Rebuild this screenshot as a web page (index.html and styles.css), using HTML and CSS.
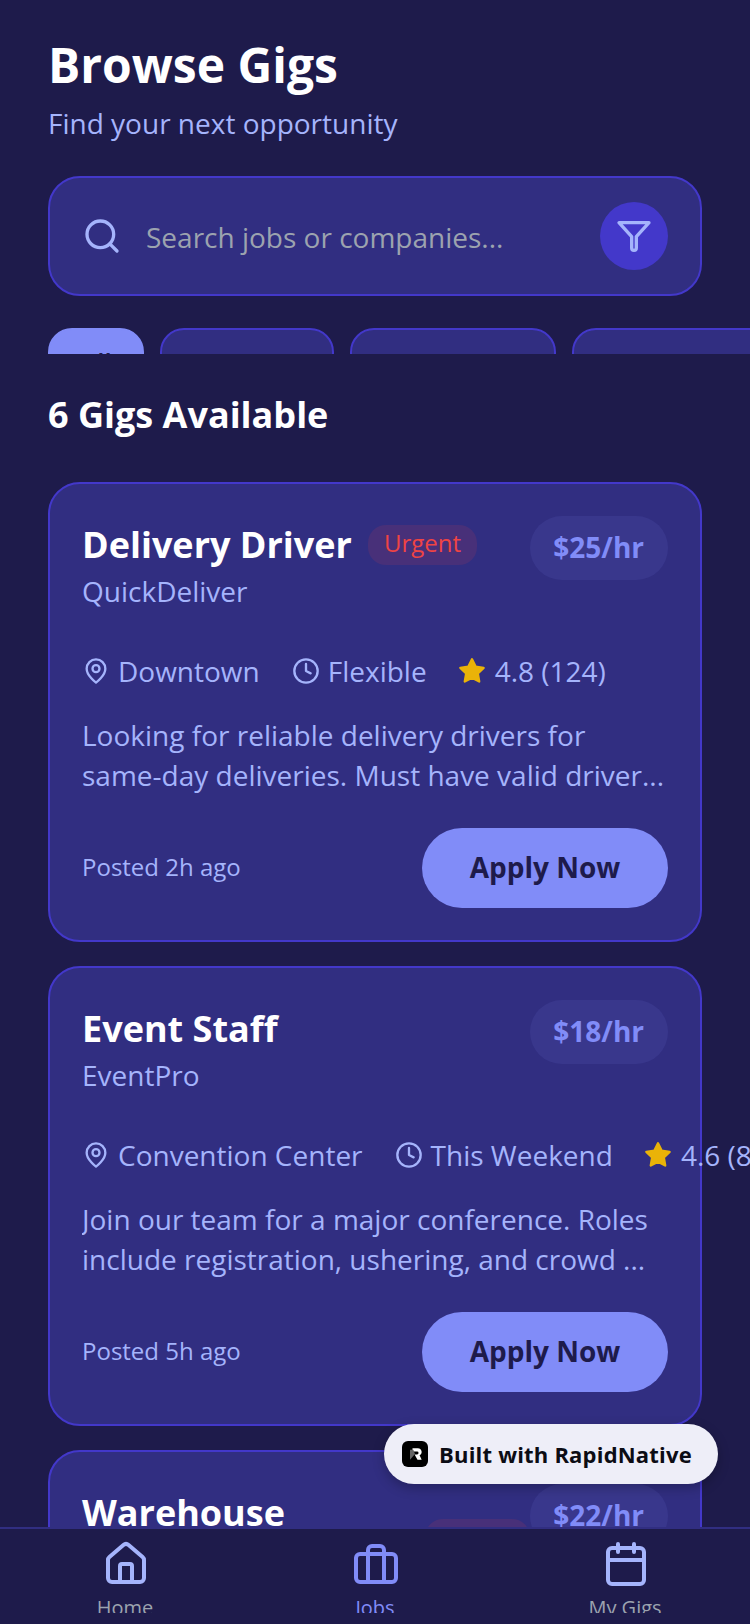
FILE: index.html
```html
<!DOCTYPE html>
<html lang="en">
<head>
  <meta charset="UTF-8" />
  <meta name="viewport" content="width=device-width, initial-scale=1" />
  <title>Browse Gigs</title>
  <link rel="stylesheet" href="styles.css">
</head>
<body>
<div class="screen">
  <main class="main">
    <header class="header">
      <h1>Browse Gigs</h1>
      <p>Find your next opportunity</p>
    </header>

    <div class="search">
      <svg class="search-icon" viewBox="0 0 24 24"><circle cx="11" cy="11" r="8"/><path d="m21 21-4.300-4.300"/></svg>
      <span class="search-text">Search jobs or companies...</span>
      <span class="filter-btn">
        <svg viewBox="0 0 24 24"><path d="M3 4h18l-7.600 8.400V19.200a1.400 1.400 0 0 1-2.800 0V12.400z"/></svg>
      </span>
    </div>

    <div class="chips">
      <span class="chip active">All</span>
      <span class="chip w1">Delivery</span>
      <span class="chip w2">Hospitality</span>
      <span class="chip w3">Warehouse</span>
    </div>

    <h2 class="count">6 Gigs Available</h2>

    <section class="card first">
      <div class="card-top">
        <div class="card-head">
          <div class="title-row">
            <h3>Delivery Driver</h3>
            <span class="urgent">Urgent</span>
          </div>
          <div class="company">QuickDeliver</div>
        </div>
        <span class="pay">$25/hr</span>
      </div>
      <div class="meta">
        <span class="meta-item"><svg viewBox="0 0 24 24"><path d="M20 10c0 6-8 12-8 12s-8-6-8-12a8 8 0 0 1 16 0z"/><circle cx="12" cy="10" r="3"/></svg>Downtown</span>
        <span class="meta-item"><svg viewBox="0 0 24 24"><circle cx="12" cy="12" r="10"/><path d="M12 6v6l4 2"/></svg>Flexible</span>
        <span class="meta-item"><svg class="star" viewBox="0 0 24 24"><path d="M12 2l3.090 6.260L22 9.270l-5 4.870 1.180 6.880L12 17.770l-6.180 3.250L7 14.140 2 9.270l6.910-1.010L12 2z"/></svg>4.8 (124)</span>
      </div>
      <p class="desc">Looking for reliable delivery drivers for same-day deliveries. Must have valid driver...</p>
      <div class="card-foot">
        <span class="posted">Posted 2h ago</span>
        <span class="apply">Apply Now</span>
      </div>
    </section>

    <section class="card">
      <div class="card-top">
        <div class="card-head">
          <div class="title-row">
            <h3>Event Staff</h3>
          </div>
          <div class="company">EventPro</div>
        </div>
        <span class="pay">$18/hr</span>
      </div>
      <div class="meta">
        <span class="meta-item"><svg viewBox="0 0 24 24"><path d="M20 10c0 6-8 12-8 12s-8-6-8-12a8 8 0 0 1 16 0z"/><circle cx="12" cy="10" r="3"/></svg>Convention Center</span>
        <span class="meta-item"><svg viewBox="0 0 24 24"><circle cx="12" cy="12" r="10"/><path d="M12 6v6l4 2"/></svg>This Weekend</span>
        <span class="meta-item"><svg class="star" viewBox="0 0 24 24"><path d="M12 2l3.090 6.260L22 9.270l-5 4.870 1.180 6.880L12 17.770l-6.180 3.250L7 14.140 2 9.270l6.910-1.010L12 2z"/></svg>4.6 (89)</span>
      </div>
      <p class="desc">Join our team for a major conference. Roles include registration, ushering, and crowd ...</p>
      <div class="card-foot">
        <span class="posted">Posted 5h ago</span>
        <span class="apply">Apply Now</span>
      </div>
    </section>

    <section class="card">
      <div class="card-top">
        <div class="card-head">
          <div class="title-row">
            <h3 class="narrow">Warehouse Associate</h3>
            <span class="urgent">Urgent</span>
          </div>
          <div class="company">StoreHub</div>
        </div>
        <span class="pay">$22/hr</span>
      </div>
    </section>
  </main>

  <nav class="tabbar">
    <div class="tab">
      <svg viewBox="0 0 24 24"><path d="M3 10a2 2 0 0 1 .7-1.500l7-6a2 2 0 0 1 2.600 0l7 6a2 2 0 0 1 .7 1.500v9a2 2 0 0 1-2 2H5a2 2 0 0 1-2-2z"/><path d="M15 21v-8a1 1 0 0 0-1-1h-4a1 1 0 0 0-1 1v8"/></svg>
      <span>Home</span>
    </div>
    <div class="tab">
      <svg viewBox="0 0 24 24"><rect x="2" y="7" width="20" height="14" rx="2"/><path d="M16 21V5a2 2 0 0 0-2-2h-4a2 2 0 0 0-2 2v16"/></svg>
      <span>Jobs</span>
    </div>
    <div class="tab">
      <svg viewBox="0 0 24 24"><rect x="3" y="4" width="18" height="18" rx="2"/><path d="M16 2v4M8 2v4M3 10h18"/></svg>
      <span>My Gigs</span>
    </div>
  </nav>

  <div class="built">
    <span class="built-logo">
      <svg viewBox="0 0 24 24"><path d="M9 5h6.500a4.500 4.500 0 0 1 2 8.500L20 19h-5l-3.500-6.500h3a1.700 1.700 0 0 0 0-3.500H9z"/><path class="built-stem" d="M6 7h4l2 5-6 7z"/></svg>
    </span>
    <span>Built with RapidNative</span>
  </div>
</div>
</body>
</html>
```

FILE: styles.css
```css
* {
  box-sizing: border-box;
}
html, body {
  margin: 0;
  height: 100%;
}
body {
  font-family: "Open Sans", "Noto Sans", sans-serif;
  background: #1e1b4b;
  color: #a5b4fc;
}
h1, h2, h3, p {
  margin: 0;
}
svg {
  fill: none;
  stroke: currentColor;
  stroke-linecap: round;
  stroke-linejoin: round;
  stroke-width: 2;
  flex: none;
}
.screen {
  position: relative;
  height: 1624px;
  display: flex;
  flex-direction: column;
  overflow: hidden;
}
.main {
  flex: 1;
  min-height: 0;
  overflow: hidden;
  padding: 32px 48px 0;
}
.header h1 {
  font-size: 48px;
  line-height: 66px;
  font-weight: 700;
  color: #fff;
}
.header p {
  font-size: 28px;
  line-height: 40px;
  margin-top: 5px;
}
.search {
  display: flex;
  align-items: center;
  height: 120px;
  margin-top: 33px;
  padding: 0 32px;
  background: #312e81;
  border: 2px solid #4338ca;
  border-radius: 32px;
}
.search-icon {
  width: 40px;
  height: 40px;
  color: #a5b4fc;
}
.search-text {
  flex: 1;
  margin-left: 24px;
  padding-top: 2px;
  font-size: 28px;
  color: #9ca3af;
}
.filter-btn {
  width: 68px;
  height: 68px;
  border-radius: 50%;
  background: #4338ca;
  display: flex;
  align-items: center;
  justify-content: center;
  color: #a5b4fc;
}
.filter-btn svg {
  width: 40px;
  height: 40px;
}
.chips {
  display: flex;
  gap: 16px;
  height: 26px;
  margin: 32px -48px 0 0;
  overflow: hidden;
}
.chip {
  flex: none;
  height: 64px;
  border-radius: 24px;
  background: #312e81;
  border: 2px solid #4338ca;
  padding: 20px 0 0;
  text-align: center;
  font-size: 26px;
  color: #a5b4fc;
}
.chip.active {
  width: 96px;
  padding-top: 14px;
  background: #818cf8;
  border-color: #818cf8;
  color: #1e1b4b;
  font-weight: 600;
}
.chip.w1 { width: 174px; }
.chip.w2 { width: 206px; }
.chip.w3 { width: 200px; }
.count {
  margin-top: 36px;
  font-size: 36px;
  line-height: 50px;
  font-weight: 700;
  color: #fff;
}
.card {
  margin-top: 24px;
  padding: 32px;
  background: #312e81;
  border: 2px solid #4338ca;
  border-radius: 32px;
}
.card.first {
  margin-top: 42px;
}
.card-top {
  display: flex;
  align-items: flex-start;
  justify-content: space-between;
}
.card-head {
  flex: 1;
  min-width: 0;
  padding-top: 3px;
}
.title-row {
  display: flex;
  align-items: center;
  gap: 16px;
}
.title-row h3 {
  flex: none;
  font-size: 36px;
  line-height: 52px;
  font-weight: 700;
  color: #fff;
}
.title-row h3.narrow {
  width: 327px;
}
.urgent {
  min-width: 0;
  padding: 0 16px;
  height: 40px;
  line-height: 36px;
  border-radius: 18px;
  font-size: 24px;
  color: #ef4444;
  background: rgba(239, 68, 68, 0.12);
}
.company {
  font-size: 28px;
  line-height: 40px;
}
.pay {
  flex: none;
  height: 64px;
  padding: 0 24px 0 23px;
  line-height: 62px;
  border-radius: 32px;
  font-size: 28px;
  font-weight: 700;
  color: #818cf8;
  background: rgba(129, 140, 248, 0.1);
}
.meta {
  display: flex;
  gap: 32px;
  margin-top: 40px;
  white-space: nowrap;
  font-size: 28px;
  line-height: 40px;
}
.meta-item {
  display: flex;
  align-items: center;
  gap: 8px;
}
.meta-item svg {
  width: 28px;
  height: 28px;
}
.meta-item .star {
  margin: 0 1px 0 -1px;
  fill: #eab308;
  stroke: #eab308;
}
.desc {
  margin-top: 24px;
  font-size: 28px;
  line-height: 40px;
  height: 80px;
  overflow: hidden;
}
.card-foot {
  display: flex;
  align-items: center;
  justify-content: space-between;
  margin-top: 33px;
}
.posted {
  padding-bottom: 3px;
  font-size: 24px;
}
.apply {
  width: 246px;
  height: 80px;
  line-height: 78px;
  border-radius: 40px;
  background: #818cf8;
  color: #1e1b4b;
  text-align: center;
  font-size: 28px;
  font-weight: 700;
}
.tabbar {
  position: relative;
  flex: none;
  height: 97px;
  display: flex;
  justify-content: space-around;
  padding-top: 11px;
  background: #1e1b4b;
  border-top: 2px solid #312e81;
}
.tab {
  width: 250px;
  height: 73px;
  overflow: hidden;
  display: flex;
  flex-direction: column;
  align-items: center;
  color: #a5b4fc;
}
.tab svg {
  width: 48px;
  height: 48px;
  margin-left: 2px;
}
.tab span {
  font-size: 20px;
  line-height: 28px;
  margin-top: 6px;
  color: #9ca3af;
}
.tab:nth-child(2),
.tab:nth-child(2) span {
  color: #818cf8;
}
.built {
  position: absolute;
  left: 384px;
  top: 1424px;
  width: 334px;
  height: 60px;
  display: flex;
  align-items: center;
  gap: 11px;
  padding-left: 18px;
  border-radius: 30px;
  background: #eeeef8;
  color: #0c0c14;
  font-size: 22px;
  font-weight: 700;
  letter-spacing: 0.2px;
  box-shadow: 0 4px 12px rgba(0, 0, 0, 0.25);
}
.built-logo {
  width: 26px;
  height: 26px;
  border-radius: 6px;
  background: #000;
  display: flex;
  align-items: center;
  justify-content: center;
}
.built-logo svg {
  width: 20px;
  height: 20px;
  fill: #fff;
  stroke: none;
}
.built-logo .built-stem {
  fill: #666;
}
```
